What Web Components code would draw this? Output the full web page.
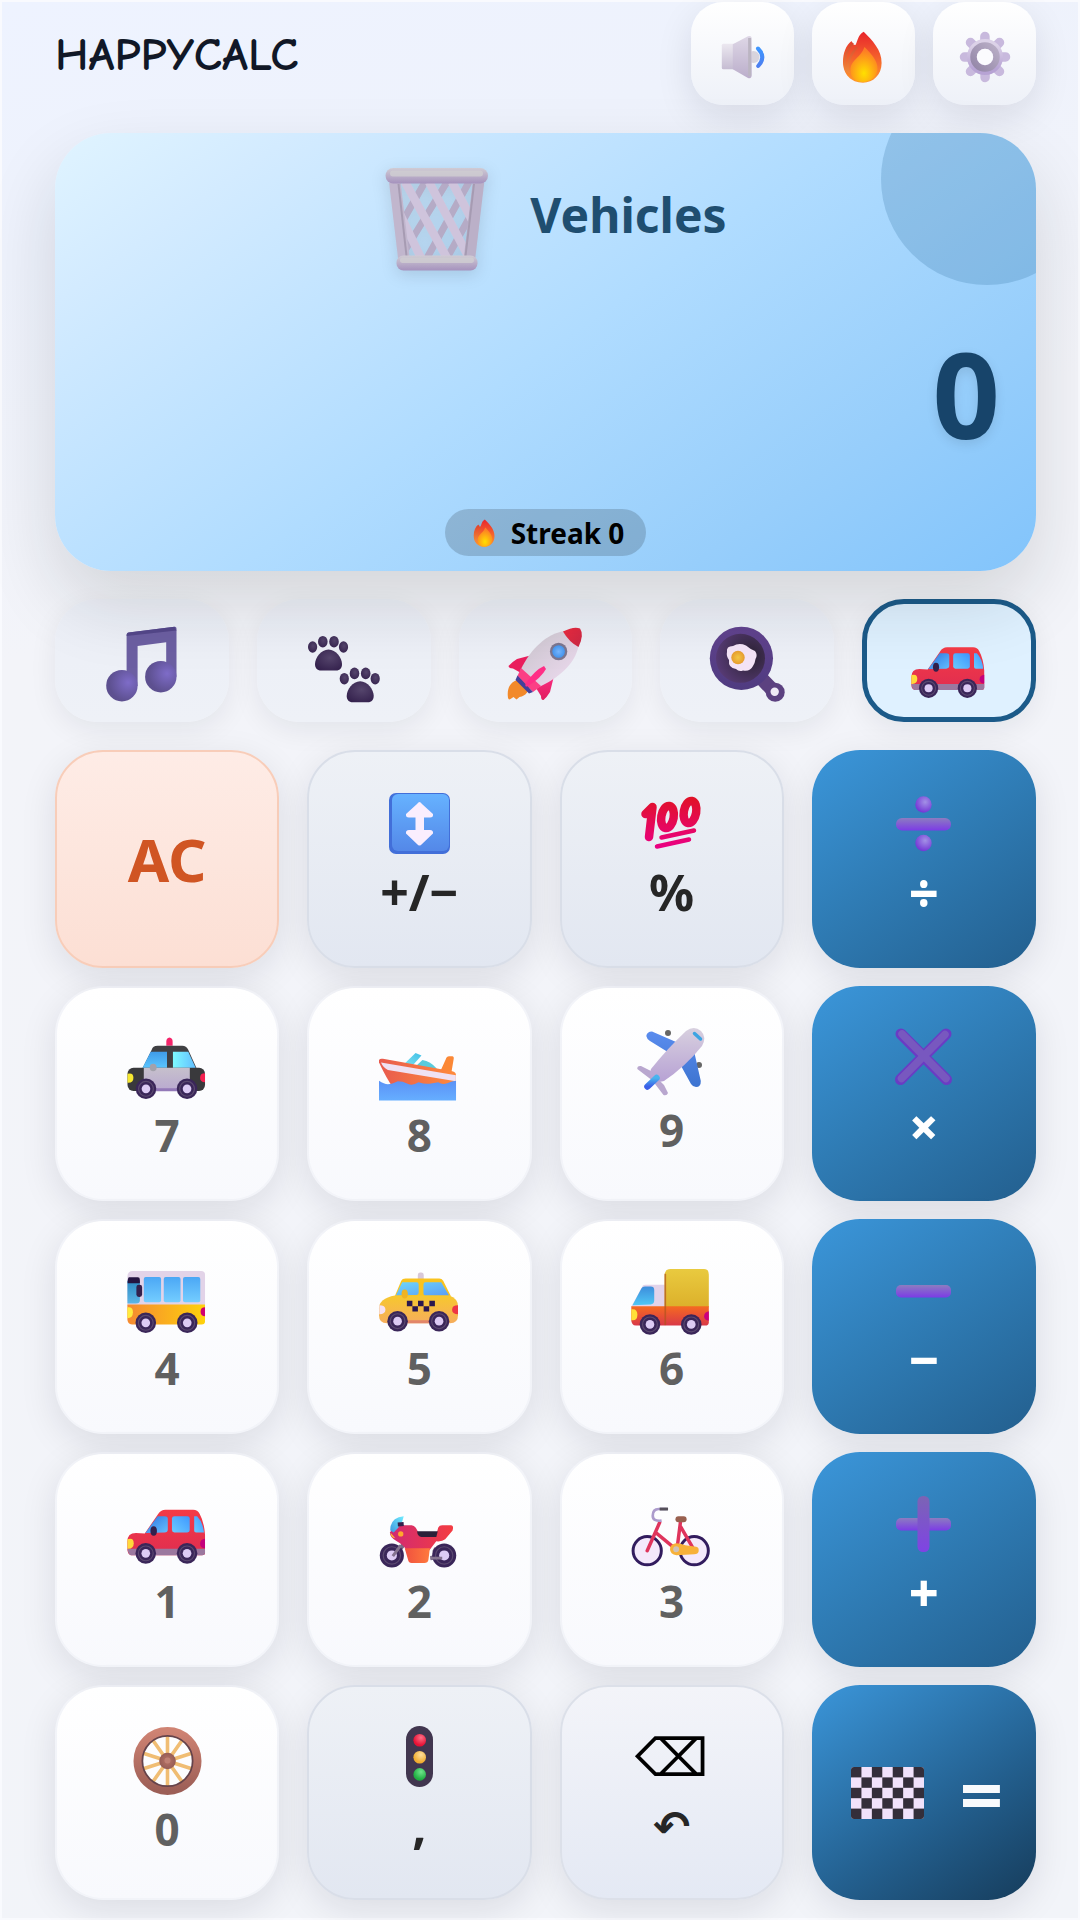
<!DOCTYPE html>
<html lang="en">
<head>
<meta charset="utf-8">
<meta name="viewport" content="width=device-width, initial-scale=1">
<title>HappyCalc</title>
<style>
  body { margin: 0; background: #f3f4f9; font-family: "Noto Sans", "Open Sans", sans-serif; }
</style>
</head>
<body>
<happy-calc>
  <calc-header slot="header">HAPPYCALC</calc-header>
  <calc-display slot="display" theme="Vehicles" streak="Streak 0">0</calc-display>
  <theme-tabs slot="tabs"></theme-tabs>
  <calc-key kind="clear">AC</calc-key>
  <calc-key kind="fn" icon="updown">+/−</calc-key>
  <calc-key kind="fn" icon="hundred">%</calc-key>
  <calc-key kind="op" icon="divide">÷</calc-key>
  <calc-key kind="num" icon="police" wide>7</calc-key>
  <calc-key kind="num" icon="boat" wide>8</calc-key>
  <calc-key kind="num" icon="plane">9</calc-key>
  <calc-key kind="op" icon="times">×</calc-key>
  <calc-key kind="num" icon="bus" wide>4</calc-key>
  <calc-key kind="num" icon="taxi" wide>5</calc-key>
  <calc-key kind="num" icon="truck" wide>6</calc-key>
  <calc-key kind="op" icon="minus">−</calc-key>
  <calc-key kind="num" icon="car" wide>1</calc-key>
  <calc-key kind="num" icon="moto" wide>2</calc-key>
  <calc-key kind="num" icon="bike" wide>3</calc-key>
  <calc-key kind="op" icon="plus">+</calc-key>
  <calc-key kind="num" icon="wheel">0</calc-key>
  <calc-key kind="fn" icon="light">,</calc-key>
  <calc-key kind="back" glyph="⌫">↶</calc-key>
  <calc-key kind="equals" icon="flag">=</calc-key>
</happy-calc>

<script>
const lin = (id, a, b, dir = '0 0 0 1') => {
  const [x1, y1, x2, y2] = dir.split(' ');
  return `<linearGradient id="${id}" x1="${x1}" y1="${y1}" x2="${x2}" y2="${y2}"><stop stop-color="${a}"/><stop offset="1" stop-color="${b}"/></linearGradient>`;
};
const rad = (id, a, b, cx = .5, cy = .5, r = .6) =>
  `<radialGradient id="${id}" cx="${cx}" cy="${cy}" r="${r}"><stop stop-color="${a}"/><stop offset="1" stop-color="${b}"/></radialGradient>`;
const tyre = (x, y, r = 10.4) =>
  `<circle cx="${x}" cy="${y}" r="${r}" fill="#3a2659"/><circle cx="${x}" cy="${y}" r="${r * .72}" fill="none" stroke="#5b4a70" stroke-width="1.2"/><circle cx="${x}" cy="${y}" r="${r * .42}" fill="#dccbf4"/>`;
const opGrad = lin('o', '#8c7cc0', '#7c3be6');
const paw = (x, y) => `<g transform="translate(${x} ${y})"><path d="M22.500 23.500C30 23.500 36 32 36 38C36 42 34 44.500 30 44.500H15C11 44.500 9 42 9 38C9 32 15 23.500 22.500 23.500Z" fill="url(#p)"/><g fill="url(#p)"><ellipse cx="6.600" cy="21" rx="4.600" ry="5.800"/><ellipse cx="16.800" cy="15.700" rx="4.800" ry="5.800"/><ellipse cx="28" cy="15.700" rx="4.800" ry="5.800"/><ellipse cx="37.500" cy="21" rx="4.600" ry="5.800"/></g></g>`;

const ICONS = {
  speaker: [52, 52, `<defs>${lin('a', '#ded7e6', '#bbaecb')}${lin('b', '#ece8f0', '#c5bcd2')}${lin('c', '#3f96ff', '#4d7ff0')}</defs>
    <circle cx="36.500" cy="26" r="6" fill="#d8d4dd"/>
    <rect x="4.800" y="12.800" width="15" height="25.500" rx="1.500" fill="url(#b)"/>
    <path d="M15.800 13.300 31 5.300Q34.700 4 34.700 8V44Q34.700 48 31 46.900L15.800 38.300Z" fill="url(#a)"/>
    <path d="M32.600 7V45" stroke="#bbb5c2" stroke-width="3"/>
    <path d="M41 17.500Q49.500 26 41.200 35" fill="none" stroke="url(#c)" stroke-width="4" stroke-linecap="round"/>`],
  flame: [52, 52, `<defs>${lin('a', '#e8242c', '#ff9a2c')}${rad('b', '#ffe000', '#fd7d25', .5, .75, .65)}${lin('c', '#d5482f', '#f28a3a')}</defs>
    <path d="M25.700 .7C34 9 44 19 43.600 32C43.600 44 35 51.700 25 51.700C13 51.700 5 43 5 31C5 22 8 14 13.600 10C14 12 15 14 17.500 14C20 9 20 4 25.700 .7Z" fill="url(#a)"/>
    <path d="M15 12C7 21 5 31 9 41M19 16C12 25 8 32 11 42" stroke="url(#c)" stroke-width="2.500" fill="none"/>
    <path d="M26.500 16C34 23 40 31 39.500 38C39 46 32 51 25 51C16 51 11.500 45 12.500 37C13.500 29 23 26 26.500 16Z" fill="url(#b)"/>`],
  gear: [52, 52, `<defs>${lin('a', '#dcd2e8', '#b7a3d4')}${lin('b', '#b9aec6', '#9487a8', '1 0 0 1')}</defs>
    <g stroke="#c8b9dd" stroke-width="9.500" stroke-linecap="round"><path d="M25.900 5.500 26.100 46.500M5.500 26.100 46.500 25.900M11.500 11.500 40.500 40.500M40.500 11.500 11.500 40.500"/></g>
    <circle cx="26" cy="26" r="12" fill="none" stroke="url(#a)" stroke-width="12"/>
    <circle cx="26" cy="26" r="11.500" fill="none" stroke="url(#b)" stroke-width="6.500"/><circle cx="26" cy="26" r="8.200" fill="#fbfbfe"/>`],
  trash: [128, 128, `<defs>${lin('a', '#d0ccd4', '#a592bd')}</defs>
    <g transform="translate(13 17)">
    <g stroke="#b5abc6" stroke-width="7" fill="none"><path d="M40 14 16 56M62 14 19 84M84 14 42 90M93 34 62 90"/></g>
    <g stroke="#cfc4dc" stroke-width="8.500" fill="none"><path d="M14 44 36 90M20 14 62 90M44 14 82 86M67 14 88 54"/></g>
    <path d="M9.800 14 18.800 90" stroke="#c1b6cd" stroke-width="11.500"/><path d="M93.500 14 84.500 90" stroke="#bbb0c8" stroke-width="11.500"/>
    <path d="M13.500 16 21.500 88" stroke="#a69bb2" stroke-width="2"/><path d="M89 16 80.500 88" stroke="#a69bb2" stroke-width="2"/>
    <rect x=".500" y="0" width="102.500" height="15.500" rx="7.700" fill="url(#a)"/><rect x="5" y="2.500" width="93" height="6" rx="3" fill="#cfcdd1" opacity=".85"/>
    <rect x="11.500" y="87.500" width="81" height="15" rx="7" fill="url(#a)"/><rect x="15" y="89.500" width="74" height="5.500" rx="2.700" fill="#cfcdd1" opacity=".85"/></g>`],
  note: [76, 76, `<defs>${rad('b', '#7e6cc8', '#5d5090', .7, .4, .6)}</defs>
    <path d="M22.600 8.500Q22.600 6.900 24.600 6.600L70.500 .8Q72.500 .5 72.500 2.500V50.700H62.200V16.300L33.600 20V60H22.600Z" fill="#6c5fa2"/>
    <path d="M22.600 10Q22.600 6.900 24.600 6.600L70.500 .8L72.500 4.500Z" fill="#54478a"/>
    <circle cx="17.900" cy="59.700" r="15.700" fill="url(#b)"/><circle cx="56.800" cy="50.700" r="15.700" fill="url(#b)"/>`],
  paws: [76, 76, `<defs>${rad('p', '#55456c', '#33204c', .55, .4, .7)}</defs>${paw(0, 0)}${paw(31.7, 31.7)}`],
  rocket: [76, 76, `<defs>${lin('a', '#c9c4cc', '#f0dcf2', '0 0 1 1')}${lin('b', '#ff2d87', '#e01f5f')}${lin('c', '#ee2b3e', '#c92745', '0 0 1 1')}${rad('d', '#78b7ff', '#3b8eea')}</defs>
    <path d="M15 53C5 54 0 60 .8 70Q1 74.500 3.500 73L6.500 71L9.500 73.500L12.500 71C19 70 22 65 22 60Z" fill="#f2892a"/>
    <path d="M29 28 10 33Q5 36 1.500 40Q2 42.500 6 42.500L14 47Z" fill="#ea1f5e"/>
    <path d="M48 46 43 66Q40 71 36.500 74Q34 74.500 34 70L29 62Z" fill="url(#b)"/>
    <path d="M57 5C40 8 24 22 13.500 44L30 62C52 52 68 38 71.500 20Z" fill="url(#a)"/>
    <path d="M56 5.500Q67 0 73 2.500Q77.500 9 71.500 21Q62 16 56 5.500Z" fill="url(#c)"/>
    <path d="M14 42 10.500 50 26 66 34 60Z" fill="#fb3f85"/><path d="M10.500 49.500 26 66 22 67.500 8.500 54Z" fill="#43409a"/>
    <path d="M37 40Q28 44 19 57Q17 62 21 60Q34 52 39 43Z" fill="#ff2e86"/>
    <circle cx="51.600" cy="25.500" r="8.700" fill="#7c7690"/><circle cx="51.600" cy="25.500" r="6.300" fill="url(#d)"/>`],
  pan: [76, 76, `<defs>${lin('a', '#62438f', '#4f3b80')}${rad('b', '#2a2231', '#5a3c79', .7, .45, .75)}${rad('c', '#f5c846', '#e4942c')}</defs>
    <path d="M52 52 66 66.500" stroke="#5c4180" stroke-width="14" stroke-linecap="round"/><circle cx="66.200" cy="66.300" r="9.500" fill="#5c4180"/><circle cx="65.700" cy="65.800" r="4.200" fill="#efe9f5"/>
    <circle cx="32.400" cy="32.300" r="31.600" fill="url(#a)"/><circle cx="31.500" cy="32.300" r="24.500" fill="url(#b)"/>
    <path d="M18 26Q17 20 24 20Q30 16.500 37 19.500Q41 23 46 25Q49 29 46.500 33Q46 37 44 40Q41 46 34 44.500Q30 46 27 43Q19 42 20 34Q17 30 18 26Z" fill="#f4e4f7"/>
    <circle cx="29" cy="31.500" r="6.700" fill="url(#c)"/>`],
  car: [82, 80, `<defs>${lin('a', '#f43b46', '#e02d50')}${lin('w', '#2f74e0', '#64c0ff', '0 0 1 1')}${lin('v', '#3e97ff', '#6acbff', '1 0 0 1')}</defs>
    <path d="M18 46 31 27Q34 22 39 22H67Q71.500 22 73.500 26Q78 34 79 47V66Q79 68 76 68H4Q.400 67 .400 62V54Q.400 45.500 9 45.500Z" fill="url(#a)"/>
    <path d="M.500 61.500H79V65Q79 68 76 68H4Q1 67 .500 61.500Z" fill="#9b789f"/>
    <path d="M18.600 45.500 31 28.500H38Q41.300 28.500 41.300 31V42Q41.300 45 38 45Z" fill="url(#w)"/><rect x="45.500" y="28.500" width="18" height="16.500" rx="2.500" fill="url(#v)"/><path d="M68 28.500H71Q76.500 34 78 45H70Q68 45 68 43Z" fill="url(#v)"/>
    <ellipse cx="27" cy="43.500" rx="3.300" ry="4.800" fill="#33204c"/><path d="M.400 52Q6.800 50 6.800 56T.400 61.500Z" fill="#ffd93b"/><path d="M79 51.500Q74 52 74 56.500T79 61Z" fill="#c4007c"/>
    ${tyre(19, 66.2)}${tyre(60.8, 66.2)}`],
  police: [82, 80, `<defs>${lin('w', '#3f9be8', '#5bc6ff')}${lin('v', '#7dfaff', '#62bdff', '0 0 1 0')}${lin('b', '#c6c0cc', '#b9a9d0')}</defs>
    <path d="M39.800 24V20Q39.800 16 43 15.700Q46.200 16 46.200 20V24Z" fill="#f4256a"/>
    <path d="M15 48 25 28Q26 24 31 24H56Q60 24 62 28L71 48Z" fill="#404043"/>
    <path d="M15.400 47 24 30H40.500V47Z" fill="url(#w)"/><path d="M46.500 30H62L69.800 47H46.500Z" fill="url(#v)"/>
    <rect x=".5" y="46.300" width="78.500" height="23.500" rx="6" fill="#39393c"/><path d="M17 46.300H63.600V69.800H17Z" fill="url(#b)"/><path d="M17 67H63.600V70H17Z" fill="#9379b8"/>
    <path d="M.500 52.500Q6.500 51 6.500 56.500T.500 61.500Z" fill="#f6e832"/><path d="M79 52Q74 52 74 56.500T79 61Z" fill="#f4204f"/><ellipse cx="26.500" cy="46" rx="3.500" ry="3.800" fill="#a3a1ab"/>
    ${tyre(19.2, 67.7)}${tyre(60.8, 67.7)}`],
  boat: [82, 80, `<defs>${lin('a', '#e85a4e', '#ff8a3c', '0 0 1 0')}${lin('b', '#5b92f6', '#66aeff')}${lin('c', '#3fc0e8', '#7ee0ee', '1 0 0 1')}</defs>
    <path d="M26 42 37 31.500 43 34 34 44Z" fill="url(#c)"/><path d="M38 44 44 38.500Q52 40 58.500 47L56 49Z" fill="#57cbdc"/>
    <path d="M62 50 67.500 38Q68.500 34.700 71 34.700H74.500Q76 35 75.700 37L73 53Z" fill="#fb8836"/>
    <path d="M0 38.500Q1 36.800 4 37.300L73 49.500Q77.800 50.500 77.800 53V59L68 66H14Q8 58 0 41Z" fill="url(#a)"/>
    <path d="M2 41 77.800 54V60L9 48.500Q4 46 2 41Z" fill="#efe1f3"/>
    <path d="M0 59.500Q5 63 9 63T19 60Q24 60 29 62.500T40 61Q46 63 51 62.500T60 61Q64 64 69 62T78 59.500V79.500H0Z" fill="url(#b)"/>`],
  plane: [69, 69, `<defs>${lin('a', '#d8d0df', '#b7a2d4')}${lin('b', '#5a8cee', '#3d74d0')}${lin('c', '#49b4ee', '#3b5fe8')}</defs>
    <circle cx="31" cy="6" r="3" fill="#666"/><circle cx="62" cy="38" r="3" fill="#666"/>
    <path d="M46 18 15 4.500Q10 4.500 9.300 9Q10 12.500 13 14L34 27ZM57 24 63.800 54Q64 60 59 60Q56 60 54 57L43 37Z" fill="url(#b)"/>
    <path d="M18 46 4 39Q0 38.500 .3 42L16 54ZM20 51 27 58 31 66Q30 69 26.500 68L15 53Z" fill="#b9a7cf"/>
    <path d="M49 4Q57-2 64 4Q70 10 65 19Q48 40 27 54Q20 56 15 52Q12 48 14 42Q30 22 49 4Z" fill="url(#a)"/>
    <path d="M10.500 59.500 19.500 51" stroke="url(#c)" stroke-width="6.500" stroke-linecap="round"/><path d="M57.500 6.500 63.500 12" stroke="#3da4e2" stroke-width="3.500" stroke-linecap="round"/>`],
  bus: [82, 80, `<defs>${lin('a', '#f58a31', '#ffd20c', '0 0 1 0')}${lin('w', '#4ba7f5', '#74cdff')}${lin('f', '#2c8ac4', '#5cb6e6')}</defs>
    <path d="M.4 52V22Q.4 16.300 6 16.300H75Q79 16.300 79 20V52Z" fill="#e2d3e8"/><path d="M.4 50H79V67Q79 70.300 75.500 70.300H5Q.4 70 .4 65Z" fill="url(#a)"/>
    <path d="M.4 26H13V46Q13 49 9 49H.4Z" fill="url(#f)"/><path d="M2 22.500H11Q13 22.500 13 25V28.500H.6Q.6 23 2 22.500Z" fill="#241440"/><rect x="9.500" y="30" width="5.800" height="12.500" rx="2.500" fill="#33204c"/>
    <g fill="url(#w)"><rect x="17" y="22.300" width="17.500" height="25.500" rx="2"/><rect x="37.200" y="22.300" width="17" height="25.500" rx="2"/><rect x="56.700" y="22.300" width="17.500" height="25.500" rx="2"/></g>
    <path d="M.4 53Q6 52 6 58T.4 64Z" fill="#ffec3f"/><path d="M79 53Q74.500 53 74.500 57.500T79 62Z" fill="#d00071"/>${tyre(19, 68.7)}${tyre(61, 68.7)}`],
  taxi: [82, 80, `<defs>${lin('a', '#f7c82d', '#f6ad5c')}${lin('v', '#6ed5fa', '#5b9ef5', '0 0 1 1')}</defs>
    <rect x="39.300" y="17.700" width="6" height="9" rx="2.500" fill="#d8c8d8"/>
    <path d="M15 44 22.500 26Q23.500 23.700 27 23.700H61Q63.500 23.700 65 26L73 42Z" fill="#f9c31f"/>
    <path d="M17 41 23.500 27.700H38Q40.200 27.700 40.200 30V38Q40.200 40.500 38 40.500ZM45 30Q45 27.700 47 27.700H63L71 41H47Q45 41 45 39Z" fill="url(#v)"/>
    <path d="M16 41H71Q80 44 80 52V61Q80 69 72 69H8Q0 69 0 61V54Q0 44 16 41Z" fill="url(#a)"/><path d="M10 66H70V69H10Z" fill="#e2866a"/>
    <path d="M28.200 46.300h5.600v5.500h-5.600zM39.500 46.300h5.600v5.500h-5.600zM51 46.300h5.600v5.500H51zM33.800 51.800h5.600v5.500h-5.600zM45.200 51.800h5.600v5.500h-5.600z" fill="#2b174e"/>
    <ellipse cx="26" cy="39.500" rx="3.200" ry="4.500" fill="#f0b322"/><path d="M.3 51Q6.500 51 6.500 55.500T.3 60Z" fill="#f6e2f3"/><path d="M80 51Q74 51 74 55.500T80 60Z" fill="#ee3545"/>${tyre(18.8, 67)}${tyre(60.8, 67)}`],
  truck: [82, 80, `<defs>${lin('a', '#f56a21', '#d93848')}${lin('y', '#e9ca3f', '#dcb02b')}${lin('w', '#3d8ddc', '#50c8f5')}</defs>
    <path d="M0 53 12 31Q12.500 30 15 30H36V53Z" fill="#e2d3ea"/><path d="M1.500 51 10.500 34Q11.500 32 14 32H20Q23.500 32 23.500 35.500V46Q23.500 49.500 20 50Z" fill="url(#w)"/>
    <path d="M34 53V21Q34 14.300 40 14.300H74Q78.800 14.300 78.800 20V53Z" fill="url(#y)"/>
    <path d="M.3 52H78.800V68Q78.800 71.500 75 71.500H5Q.3 71 .3 66Z" fill="url(#a)"/><path d="M34.700 19V71" stroke="#b1541e" stroke-width="1.700" opacity=".7"/>
    <path d="M.3 55Q6.500 54 6.500 60.500T.3 66Z" fill="#ffe038"/><path d="M78.800 57Q74 58 74 62T78.800 66.500Z" fill="#ca0080"/>${tyre(19.2, 70.3)}${tyre(61, 70.3)}`],
  moto: [82, 80, `<defs>${lin('a', '#d02a73', '#f43c41', '0 0 1 0')}${lin('o', '#f0513f', '#ff7a3d', '0 0 1 0')}${lin('w', '#3d97df', '#71edff', '0 1 1 0')}</defs>
    <path d="M26 56 15 69M52 71 66 69M55 62 66 68" stroke="#786a85" stroke-width="4.500"/>${tyre(13, 68.3, 12.2)}${tyre(66, 68.3, 12.2)}
    <path d="M22 58 14 69M52 71H64" stroke="#84738f" stroke-width="3"/>
    <path d="M11 45Q15 37.700 22 37.700H33Q38 38 40 47H58L60 40Q61 37.700 64 37.700H73Q76 38 74.500 43L67 52Q64 54.500 58 54L51 63H28Q24 57 18 54Q11 50 11 45Z" fill="url(#a)"/>
    <path d="M26 61H51.500L50 73Q49.500 76 46 76H33Q30 76 29.500 73Z" fill="url(#o)"/>
    <path d="M38.500 43.700H59.500L58 49.500H43Q39 49 38.500 43.700Z" fill="#2c2139"/>
    <path d="M11.400 43Q11 30 25 28.500Q24 37 14.800 45Z" fill="url(#w)"/><path d="M19 37 25 36.500" stroke="#33204c" stroke-width="4"/>
    <path d="M11.500 45 16.500 51Q12 50 11.500 45Z" fill="#ffc12e"/><circle cx="22" cy="46.500" r="2.700" fill="#ffa82c"/>`],
  bike: [82, 80, `
    <g fill="#f4e9fb" stroke="#321c5e" stroke-width="3"><circle cx="16.400" cy="63.500" r="14.300"/><circle cx="64" cy="63.500" r="14.300"/></g>
    <path d="M16.400 63.500 29 35M25.400 45.500 43.500 60.300M50.200 33.500 47 58.500M50.200 39 62.500 60.300" fill="none" stroke="#df345c" stroke-width="3.500" stroke-linecap="round"/>
    <path d="M31 33Q22 34 22 28Q22 21.500 28 21.300H36" fill="none" stroke="#ac9bcc" stroke-width="2.700"/><path d="M29 21.300H37.500" stroke="#55505a" stroke-width="3"/>
    <rect x="45" y="28.700" width="11.300" height="6" rx="3" fill="#99604f"/>
    <path d="M45.500 56Q50 56 55 58L66 59.500Q69 60 68.500 64Q68 67 64 67L46 68Q39.500 67 39.500 62T45.500 56Z" fill="#f7b139"/><circle cx="45.700" cy="62" r="3" fill="#cfc2ba"/>`],
  wheel: [69, 69, `<defs>${lin('a', '#cf8373', '#9c5e56')}${rad('b', '#b97467', '#8e5852')}</defs>
    <g stroke="#f0bd73" stroke-width="3.600"><path d="M34.500 9V61M19 13 50 57M50 13 19 57M9.500 27 59.500 43M9.500 43 59.500 27"/></g>
    <circle cx="34.500" cy="35" r="26" fill="none" stroke="#65434b" stroke-width="3.500"/><circle cx="34.500" cy="35" r="30" fill="none" stroke="url(#a)" stroke-width="8"/><circle cx="34.500" cy="35" r="8.300" fill="url(#b)"/><circle cx="34.500" cy="34.500" r="3" fill="#bf8074"/>`],
  light: [61, 61, `<defs>${rad('r', '#ff6f86', '#e81135', .6, .3)}${rad('y', '#ffdf9d', '#f0ac2f', .6, .3)}${rad('g', '#6fe58b', '#20ae42', .6, .3)}</defs>
    <rect x="17" y="0" width="27" height="61" rx="13.500" fill="#41364f"/><circle cx="30.700" cy="14.200" r="6.300" fill="url(#r)"/><circle cx="30.700" cy="31.300" r="6.300" fill="url(#y)"/><circle cx="30.700" cy="48.400" r="6.300" fill="url(#g)"/>`],
  updown: [61, 61, `<defs>${lin('a', '#66b2ff', '#5488e8')}</defs>
    <rect width="61" height="61" rx="7" fill="#426fd9"/><rect x="3" y="1" width="57" height="57" rx="6" fill="url(#a)"/>
    <path d="M30.500 9 Q31.500 9 33 11L44 21Q44.500 24.500 41 24.500H35V37H41Q44.500 37 44 40.500L33 51Q30.500 54 28 51L17 40.500Q16.500 37 20 37H26.500V24.500H20Q16.500 24.500 17 21L28 11Q29.500 9 30.500 9Z" fill="#faeefe"/>`],
  hundred: [61, 61, `<defs><linearGradient id="s" gradientUnits="userSpaceOnUse" x1="0" y1="4" x2="0" y2="56"><stop stop-color="#e01226"/><stop offset="1" stop-color="#ea0086"/></linearGradient></defs>
    <g fill="none" stroke="url(#s)" stroke-linecap="round" stroke-linejoin="round"><path d="M4.500 21 11.500 14 8 44" stroke-width="8.500"/>
    <ellipse cx="26.500" cy="24" rx="6.200" ry="11.200" transform="rotate(10 26.500 24)" stroke-width="8.500"/><ellipse cx="49" cy="19" rx="6.200" ry="11.200" transform="rotate(10 49 19)" stroke-width="8.500"/>
    <path d="M20.500 44.500 53 37.500M16 53.500 48 46.500" stroke-width="4.500"/></g>`],
  divide: [61, 61, `<defs>${opGrad}${rad('d', '#a391e6', '#7437d6', .6, .35, .65)}</defs><rect x="3" y="25" width="55" height="12.500" rx="6" fill="url(#o)"/><circle cx="30.500" cy="11.500" r="8.200" fill="url(#d)"/><circle cx="30.500" cy="50" r="8.200" fill="url(#d)"/>`],
  times: [61, 61, `<path d="M8 7 53.500 52.500M53 7 7.500 52.500" stroke="#6a3cc4" stroke-width="11" stroke-linecap="round"/><path d="M9 7 53 51.500M52 7.500 8.500 51.500" stroke="#7858bf" stroke-width="7.500" stroke-linecap="round"/>`],
  minus: [61, 61, `<defs>${opGrad}</defs><rect x="3" y="25" width="55" height="12.500" rx="5" fill="url(#o)"/>`],
  plus: [61, 61, `<defs>${opGrad}${lin('q', '#7b64b4', '#7f43e4')}</defs><rect x="3" y="25" width="55" height="12.500" rx="5" fill="url(#o)"/><rect x="24.500" y="3" width="12" height="56" rx="5.500" fill="url(#q)"/>`],
  flag: [73, 52, (() => {
    let s = '<defs><clipPath id="k"><rect width="73" height="52" rx="3"/></clipPath></defs><g clip-path="url(#k)"><rect width="73" height="52" fill="#f1e2fb"/>';
    for (let r = 0; r < 5; r++) for (let c = 0; c < 7; c++)
      if ((r + c) % 2 === 0) s += `<rect x="${c * 10.43}" y="${r * 10.4}" width="10.430" height="10.400" fill="#342e3a"/>`;
    return s + '</g>';
  })()]
};

class EmojiIcon extends HTMLElement {
  connectedCallback() {
    const [w, h, art] = ICONS[this.getAttribute('name')];
    this.attachShadow({ mode: 'open' }).innerHTML = `
      <style>:host{display:block;flex:none;width:${w}px;height:${h}px}svg{display:block;width:100%;height:100%;overflow:visible}</style>
      <svg viewBox="0 0 ${w} ${h}" aria-hidden="true">${art}</svg>`;
  }
}

class CalcHeader extends HTMLElement {
  connectedCallback() {
    this.attachShadow({ mode: 'open' }).innerHTML = `
      <style>
        :host{display:flex;align-items:center;justify-content:space-between}
        h1{margin:0;padding-top:2px;font:700 47px/56px "Comic Neue","Comic Sans MS",Lato,sans-serif;color:#111827}
        nav{display:flex;gap:18px}
        button{display:grid;place-items:center;width:103px;height:103px;padding:6px 0 0;border:0;border-radius:32px;
          background:linear-gradient(#fff,#eef1f8);box-shadow:0 12px 36px rgba(15,23,42,.1)}
      </style>
      <h1><slot></slot></h1>
      <nav>
        <button aria-label="Sound"><emoji-icon name="speaker"></emoji-icon></button>
        <button aria-label="Streak"><emoji-icon name="flame"></emoji-icon></button>
        <button aria-label="Settings"><emoji-icon name="gear"></emoji-icon></button>
      </nav>`;
  }
}

class CalcDisplay extends HTMLElement {
  connectedCallback() {
    this.attachShadow({ mode: 'open' }).innerHTML = `
      <style>
        :host{display:flex;flex-direction:column;justify-content:space-between;box-sizing:border-box;min-height:438px;
          padding:18px 36px 15px;position:relative;z-index:1;border-radius:56px;
          background:linear-gradient(145deg,#e0f4ff 0%,#d3ebff 15%,#b0dcff 50%,#97cefb 78%,#82c4fb 100%);
          box-shadow:0 32px 72px rgba(20,25,30,.14)}
        .clip{position:absolute;inset:0;border-radius:inherit;overflow:hidden}
        .clip::after{content:"";position:absolute;right:-57px;top:-60px;width:212px;height:212px;border-radius:50%;background:rgba(28,94,146,.2)}
        .theme{display:flex;align-items:center;justify-content:center;gap:30px;padding-left:8px;font-size:48px;line-height:64px;font-weight:700;color:#1f4e70}
        .theme emoji-icon{filter:drop-shadow(0 4px 8px rgba(0,0,0,.12))}
        output{font-size:118px;line-height:160px;font-weight:700;text-align:right;color:#17446a;text-shadow:0 4px 12px rgba(0,0,0,.1)}
        .streak{display:flex;align-items:center;align-self:center;box-sizing:border-box;height:47px;gap:16px;padding:0 22px 0 30px;border-radius:24px;
          background:rgba(0,0,0,.16);font-size:28px;line-height:40px;font-weight:700;color:#000}
        .streak emoji-icon{width:28px;height:28px;margin:0 -4px}
      </style>
      <div class="clip"></div>
      <div class="theme"><emoji-icon name="trash"></emoji-icon><span>${this.getAttribute('theme')}</span></div>
      <output><slot></slot></output>
      <div class="streak"><emoji-icon name="flame"></emoji-icon><span>${this.getAttribute('streak')}</span></div>`;
  }
}

class ThemeTabs extends HTMLElement {
  connectedCallback() {
    const tabs = [['note', 'Music'], ['paws', 'Animals'], ['rocket', 'Space'], ['pan', 'Food'], ['car', 'Vehicles']];
    this.attachShadow({ mode: 'open' }).innerHTML = `
      <style>
        :host{display:grid;grid-template-columns:repeat(5,1fr);gap:28px}
        button{display:grid;place-items:center;box-sizing:border-box;height:123px;padding:6px 0 0;border:0;border-radius:42px;
          background:linear-gradient(#eceff7,#eef1f7);box-shadow:0 8px 28px rgba(15,23,42,.07)}
        button[aria-pressed=true]{border:5px solid #1b5a89;background:#dff1ff}
        emoji-icon{width:76px;height:76px}
      </style>
      ${tabs.map(([i, n]) => `<button aria-label="${n}" aria-pressed="${i === 'car'}"><emoji-icon name="${i}"></emoji-icon></button>`).join('')}`;
  }
}

class CalcKey extends HTMLElement {
  connectedCallback() {
    const icon = this.getAttribute('icon'), glyph = this.getAttribute('glyph');
    this.attachShadow({ mode: 'open' }).innerHTML = `
      <style>
        :host{display:grid}
        button{display:flex;flex-direction:column;align-items:center;justify-content:center;gap:4px;box-sizing:border-box;min-width:0;padding:0;
          border:2px solid transparent;border-radius:48px;font:700 50px/68px "Noto Sans","Open Sans","DejaVu Sans",sans-serif;color:#262626;
          box-shadow:0 10px 36px rgba(15,23,42,.1)}
        :host([kind=clear]) button{font-size:60px;line-height:80px;color:#d05523;border-color:#f8cdb9;background:linear-gradient(#feece6,#fcdfd4)}
        :host([kind=fn]) button{border-color:#d9dee8;background:linear-gradient(#eef1f6,#e2e7f1)}
        :host([kind=back]) button{font-size:44px;line-height:60px;border-color:#dce0e9;background:linear-gradient(#f3f4f9,#e4e9f4)}
        :host([kind=num]) button{font-size:44px;line-height:60px;color:#606060;background:linear-gradient(#fff,#f8f9fd) padding-box}
        :host([kind=num][wide]) emoji-icon{width:81px;height:79px}
        :host([kind=op]) button{border:0;font-size:52px;line-height:68px;font-weight:800;color:#fff;background:linear-gradient(145deg,#3b96da,#2f7cb5 48%,#235f8e)}
        :host([kind=equals]) button{flex-direction:row;gap:36px;border:0;padding-left:6px;font-size:76px;line-height:104px;color:#f8fafc;background:linear-gradient(145deg,#3b96da,#235f8e 60%,#163c5b)}
        .glyph{height:61px;font:400 52px/46px "Noto Sans Symbols","DejaVu Sans",sans-serif;color:#000}
      </style>
      <button>${icon ? `<emoji-icon name="${icon}"></emoji-icon>` : ''}${glyph ? `<span class="glyph">${glyph}</span>` : ''}<span><slot></slot></span></button>`;
  }
}

class HappyCalc extends HTMLElement {
  connectedCallback() {
    this.attachShadow({ mode: 'open' }).innerHTML = `
      <style>
        :host{display:flex;flex-direction:column;box-sizing:border-box;min-height:100vh;padding:0 42px 17px 53px;border:2px solid #f9fafe;
          background:linear-gradient(165deg,#eef3ff 0%,#eef2fc 12%,#f3f4f9 30%,#f2f4f9 100%)}
        main{display:contents}
        slot[name=display]{display:block;margin-top:28px}
        slot[name=tabs]{display:block;margin-top:28px}
        .keys{display:grid;grid-template-columns:repeat(4,1fr);grid-template-rows:minmax(218px,auto);grid-auto-rows:minmax(215px,auto);gap:18px 28px;margin-top:28px}
      </style>
      <main><slot name="header"></slot><slot name="display"></slot><slot name="tabs"></slot><section class="keys"><slot></slot></section></main>`;
  }
}

customElements.define('emoji-icon', EmojiIcon);
customElements.define('calc-header', CalcHeader);
customElements.define('calc-display', CalcDisplay);
customElements.define('theme-tabs', ThemeTabs);
customElements.define('calc-key', CalcKey);
customElements.define('happy-calc', HappyCalc);
</script>
</body>
</html>
